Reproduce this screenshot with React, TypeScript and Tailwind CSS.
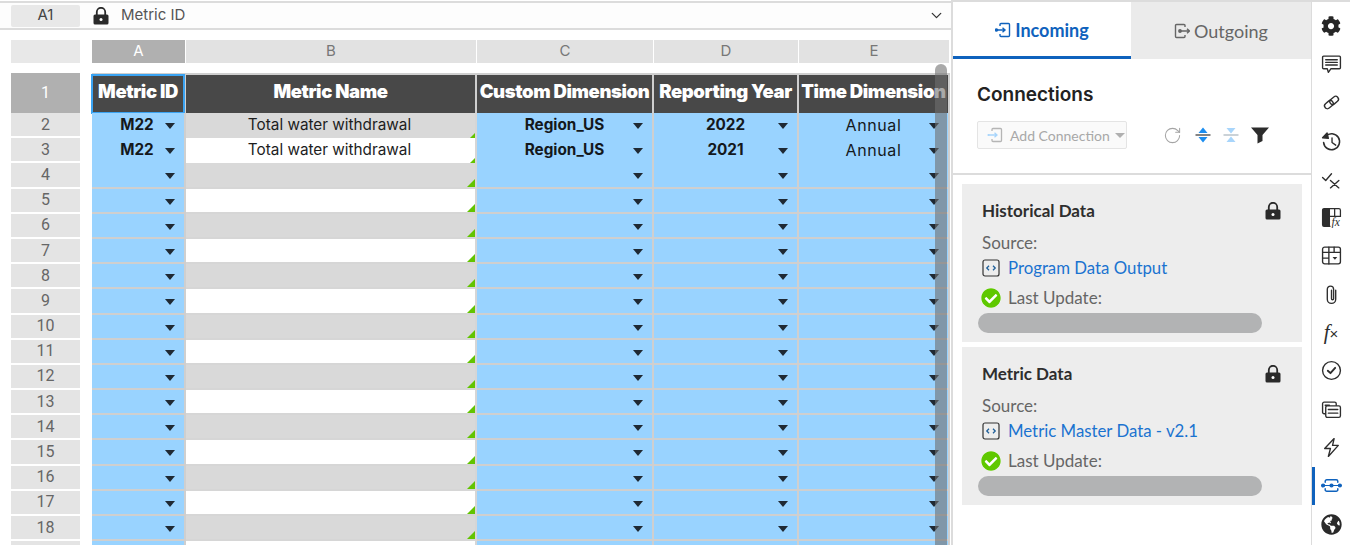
import { useMemo } from 'react';
import { FaCog, FaGlobeAmericas, FaCheckCircle } from 'react-icons/fa';
import { ChevronDown, RotateCw } from 'lucide-react';

const gridCols = 'grid grid-cols-[92px_94px_291px_177px_145px_151px]';

type Row = { id: string; name: string; dim: string; year: string; time: string };

const rows: Row[] = [
  { id: 'M22', name: 'Total water withdrawal', dim: 'Region_US', year: '2022', time: 'Annual' },
  { id: 'M22', name: 'Total water withdrawal', dim: 'Region_US', year: '2021', time: 'Annual' },
];

function LockIcon({ className }: { className?: string }) {
  return (
    <svg width="16" height="18" viewBox="0 0 16 18" className={className}>
      <path d="M3.800 8V5a4.200 4.200 0 0 1 8.400 0v3" fill="none" stroke="#2a2a2a" strokeWidth="1.800" />
      <rect x="0.500" y="7.500" width="15" height="10" rx="1.500" fill="#2a2a2a" />
      <circle cx="8" cy="12.500" r="1.500" fill="#fff" />
    </svg>
  );
}

function Caret() {
  return (
    <span className="absolute right-[9px] top-[10px] h-0 w-0 border-x-[5.5px] border-t-[6px] border-x-transparent border-t-[#1f2933]" />
  );
}

function HeaderCell({ label, selected }: { label: string; selected?: boolean }) {
  return (
    <div className="relative flex items-center justify-center whitespace-nowrap border-r-2 border-t-2 border-[#cfcfcf] bg-[#484848] pb-[4px] font-['Inter',sans-serif] text-[18.5px] font-black tracking-[-0.4px] text-white">
      {label}
      {selected && <span className="absolute -inset-y-[1px] -left-[1px] -right-[1px] border-2 border-[#3aa3f2]" />}
    </div>
  );
}

function DropCell({ value, bold }: { value?: string; bold?: boolean }) {
  return (
    <div
      className={`relative flex items-center justify-center border-b-2 border-r-2 border-[#cfcfcf] bg-[#99d3ff] pb-[4px] text-[#14181c] ${
        bold ? 'text-[15.3px] font-bold' : 'text-[16px] font-normal tracking-[0.6px]'
      }`}
    >
      {value}
      <Caret />
    </div>
  );
}

function SheetRow({ n, row }: { n: number; row?: Row }) {
  const shaded = n % 2 === 0;
  return (
    <div className={`${gridCols} h-[25.2px]`}>
      <div className="ml-[11px] mr-[12px] flex h-[23.2px] items-center justify-center bg-[#e4e4e4] font-['Roboto',sans-serif] text-[16px] text-[#666]">
        {n < 19 ? n : ''}
      </div>
      <div className="relative flex items-center justify-center border-b-2 border-r-2 border-[#cfcfcf] bg-[#99d3ff] pb-[4px] pr-[2px] text-[15.3px] font-bold text-[#14181c]">
        {row?.id}
        <Caret />
      </div>
      <div
        className={`relative flex items-center justify-center border-b-2 border-r-2 border-[#d6d6d6] pb-[4px] pr-[2px] text-[15.3px] text-[#1d1d1d] ${
          shaded ? 'bg-[#d9d9d9]' : 'bg-white'
        }`}
      >
        {row?.name}
        <span className="absolute bottom-0 right-0 h-0 w-0 border-b-[8px] border-l-[8px] border-b-[#62c400] border-l-transparent" />
      </div>
      <DropCell value={row?.dim} bold />
      <DropCell value={row?.year} bold />
      <DropCell value={row?.time} />
    </div>
  );
}

function ColumnLetter({ label, active }: { label: string; active?: boolean }) {
  return (
    <div
      className={`mr-[1px] flex items-center justify-center text-[15px] ${
        active ? 'bg-[#b0b0b0] text-white' : 'bg-[#e2e2e2] text-[#777]'
      }`}
    >
      {label}
    </div>
  );
}

function Sheet() {
  const sheetRows = useMemo(() => Array.from({ length: 18 }, (_, i) => i + 2), []);
  return (
    <div className="flex w-[951px] shrink-0 flex-col font-['Inter',sans-serif]">
      <div className="mt-[1px] flex h-[29px] items-center border-y-2 border-[#dcdcdc] bg-[#fdfdfd] pl-[11px] pr-[6px]">
        <div className="flex h-[22px] w-[69px] items-center justify-center rounded-[2px] bg-[#e8e8e8] text-[15px] text-[#444]">
          A1
        </div>
        <LockIcon className="ml-[13px]" />
        <span className="ml-[12px] text-[15px] text-[#555]">Metric ID</span>
        <ChevronDown className="ml-auto h-[17px] w-[17px] text-[#333]" strokeWidth={1.8} />
      </div>

      <div className="relative min-h-0 flex-1 overflow-hidden pt-[10px]">
        <div className={`${gridCols} h-[22px]`}>
          <div className="ml-[11px] mr-[12px] bg-[#e8e8e8]" />
          <ColumnLetter label="A" active />
          <ColumnLetter label="B" />
          <ColumnLetter label="C" />
          <ColumnLetter label="D" />
          <ColumnLetter label="E" />
        </div>

        <div className={`${gridCols} mt-[11px] h-[40px]`}>
          <div className="ml-[11px] mr-[12px] flex items-center justify-center bg-[#b0b0b0] font-['Roboto',sans-serif] text-[16px] text-white">
            1
          </div>
          <HeaderCell label="Metric ID" selected />
          <HeaderCell label="Metric Name" />
          <HeaderCell label="Custom Dimension" />
          <HeaderCell label="Reporting Year" />
          <HeaderCell label="Time Dimension" />
        </div>

        {sheetRows.map((n) => (
          <SheetRow key={n} n={n} row={rows[n - 2]} />
        ))}

        {/* scrollbar thumb floats over the cells */}
        <div className="absolute bottom-0 left-[935px] top-[34px] w-[12px] rounded-t-full bg-[#707070]/60" />
      </div>
    </div>
  );
}

function TabIncoming() {
  return (
    <svg width="16" height="16" viewBox="0 0 16 16" fill="none" stroke="currentColor" strokeWidth="1.4">
      <path d="M5 4V2.500A1 1 0 0 1 6 1.500h7.500a1 1 0 0 1 1 1v11a1 1 0 0 1-1 1H6a1 1 0 0 1-1-1V12" />
      <circle cx="1.500" cy="8" r="1.100" fill="currentColor" />
      <path d="M1.500 8H9.500M7.500 5.800 10 8l-2.500 2.200" />
    </svg>
  );
}

function TabOutgoing() {
  return (
    <svg width="16" height="16" viewBox="0 0 16 16" fill="none" stroke="currentColor" strokeWidth="1.4">
      <path d="M11 4V2.500a1 1 0 0 0-1-1H2.500a1 1 0 0 0-1 1v11a1 1 0 0 0 1 1H10a1 1 0 0 0 1-1V12" />
      <circle cx="6" cy="8" r="1.200" fill="currentColor" />
      <path d="M6 8h9M13 5.800 15.500 8 13 10.200" />
    </svg>
  );
}

function AddConnectionIcon() {
  return (
    <svg width="16" height="16" viewBox="0 0 16 16" fill="none" strokeWidth="1.300" className="shrink-0">
      <path d="M5 4V2.500A1 1 0 0 1 6 1.500h7.500a1 1 0 0 1 1 1v11a1 1 0 0 1-1 1H6a1 1 0 0 1-1-1V12" stroke="#b5b5b5" />
      <circle cx="1.500" cy="8" r="1.100" fill="#a8d5fb" />
      <path d="M1.500 8H9.500M7.500 5.800 10 8l-2.500 2.200" stroke="#a8d5fb" />
    </svg>
  );
}

function ExpandIcon() {
  return (
    <svg width="16" height="18" viewBox="0 0 16 18" className="text-[#1b8df0]">
      <path d="M8 1.500 12.500 7h-9z" fill="currentColor" />
      <path d="M8 16.500 3.500 11h9z" fill="currentColor" />
      <path d="M0.500 9h15" stroke="#333" strokeWidth="1.200" />
    </svg>
  );
}

function CollapseIcon() {
  return (
    <svg width="16" height="18" viewBox="0 0 16 18" className="text-[#a8d5fb]">
      <path d="M8 7.500 3.500 2h9z" fill="currentColor" />
      <path d="M8 10.500 12.500 16h-9z" fill="currentColor" />
      <path d="M0.500 9h15" stroke="#a9b4bd" strokeWidth="1.200" />
    </svg>
  );
}

function SourceIcon() {
  return (
    <svg width="18" height="18" viewBox="0 0 18 18" fill="none" stroke="#333" className="shrink-0">
      <rect x="1" y="1" width="16" height="16" rx="2" strokeWidth="1.200" />
      <path d="M7 6.800 4.800 9 7 11.200M11 6.800 13.200 9 11 11.200" stroke="#1f5f99" strokeWidth="1.300" />
    </svg>
  );
}

function ConnectionCard({ title, source }: { title: string; source: string }) {
  return (
    <div className="h-[158px] bg-[#ededed] pl-[16px] pr-[21px] pt-[15px] font-['Lato',sans-serif]">
      <div className="flex h-[24px] items-center justify-between pl-[4px]">
        <span className="text-[17px] font-bold text-[#2e2e2e]">{title}</span>
        <LockIcon />
      </div>
      <div className="mt-[8px] h-[24px] pl-[4px] text-[17px] leading-[24px] text-[#666]">Source:</div>
      <div className="mt-[1px] flex h-[24px] items-center pl-[4px] text-[16.8px] text-[#1a73d0]">
        <SourceIcon />
        <span className="ml-[8px]">{source}</span>
      </div>
      <div className="mt-[6px] flex h-[24px] items-center pl-[3px] text-[17px] text-[#666]">
        <span className="relative h-[20px] w-[20px] shrink-0 rounded-full bg-white">
          <FaCheckCircle className="absolute inset-0 h-[20px] w-[20px] text-[#5fc800]" />
        </span>
        <span className="ml-[7px]">Last Update:</span>
      </div>
      <div className="mt-[3px] h-[20px] w-[284px] rounded-full bg-[#b2b3b4]" />
    </div>
  );
}

function ConnectionsPanel() {
  return (
    <div className="flex w-[360px] shrink-0 flex-col border-l-2 border-t-2 border-[#dcdcdc] font-['Lato',sans-serif]">
      <div className="flex h-[57px]">
        <div className="flex w-[178px] items-center justify-center gap-[4px] border-b-[3px] border-[#0f62bd] pt-[2px] text-[18px] font-bold text-[#0f62bd]">
          <TabIncoming />
          Incoming
        </div>
        <div className="flex flex-1 items-center justify-center gap-[4px] bg-[#ebebeb] pt-[1px] text-[18px] text-[#666]">
          <TabOutgoing />
          Outgoing
        </div>
      </div>

      <div className="h-[116px] border-b-2 border-[#dcdcdc] pl-[24px] pt-[24px]">
        <h2 className="font-['Inter',sans-serif] text-[19px] font-semibold leading-[24px] text-[#222]">Connections</h2>
        <div className="mt-[14px] flex h-[28px] items-center">
          <div className="flex h-[28px] w-[150px] items-center whitespace-nowrap rounded-[2px] border border-[#e4e4e4] bg-[#fafafa] pl-[9px] text-[14px] text-[#a8a8a8]">
            <AddConnectionIcon />
            <span className="ml-[7px]">Add Connection</span>
            <span className="ml-[5px] h-0 w-0 border-x-[5px] border-t-[5px] border-x-transparent border-t-[#b0b0b0]" />
          </div>
          <RotateCw className="ml-[36px] h-[19px] w-[19px] text-[#a4a4a4]" strokeWidth={1.3} />
          <span className="ml-[13px]">
            <ExpandIcon />
          </span>
          <span className="ml-[12px]">
            <CollapseIcon />
          </span>
          <svg width="18" height="17" viewBox="0 0 18 17" className="ml-[12px] text-[#2c2c2c]">
            <path d="M0 0.500h18L11.500 8v6L6.500 16.500V8z" fill="currentColor" />
          </svg>
        </div>
      </div>

      <div className="flex flex-col gap-[5px] pl-[9px] pr-[9px] pt-[9px]">
        <ConnectionCard title="Historical Data" source="Program Data Output" />
        <ConnectionCard title="Metric Data" source="Metric Master Data - v2.1" />
      </div>
    </div>
  );
}

function RailSvg({ children }: { children: React.ReactNode }) {
  return (
    <svg width="21" height="21" viewBox="0 0 20 20" fill="none" stroke="#2e2e2e" strokeWidth="1.300" strokeLinecap="round" strokeLinejoin="round">
      {children}
    </svg>
  );
}

const railIcons: React.ReactNode[] = [
  <FaCog key="gear" className="h-[20px] w-[20px] text-[#262626]" />,
  <RailSvg key="comment">
    <path d="M2.500 2h15a1 1 0 0 1 1 1v10a1 1 0 0 1-1 1H9.500l-2.500 3.500L6 14H2.500a1 1 0 0 1-1-1V3a1 1 0 0 1 1-1z" />
    <path d="M4.500 5.500h11M4.500 8h11M4.500 10.500h11" />
  </RailSvg>,
  <RailSvg key="link">
    <rect x="3" y="9.300" width="9" height="5.400" rx="2.600" transform="rotate(-40 7.500 12)" />
    <rect x="8" y="5.300" width="9" height="5.400" rx="2.600" transform="rotate(-40 12.500 8)" />
  </RailSvg>,
  <RailSvg key="history">
    <path d="M4.500 5a7.600 7.600 0 1 1-2 6" strokeWidth="1.500" />
    <path d="M1.500 6.500 5.800 1.800 7 7z" fill="#2e2e2e" />
    <path d="M10.500 6.500V11l3.500 2.500" />
  </RailSvg>,
  <RailSvg key="checkx">
    <path d="M1.500 8 4.500 11 10 4.500M9 11l8 7M17 11l-8 7" />
  </RailSvg>,
  <svg key="fxgrid" width="21" height="21" viewBox="0 0 20 20" fill="none" stroke="#2e2e2e" strokeWidth="1.200">
    <path d="M3 1.500h5v17H3a1.500 1.500 0 0 1-1.500-1.500V3A1.500 1.500 0 0 1 3 1.500z" fill="#2e2e2e" />
    <path d="M8 1.500h9A1.500 1.500 0 0 1 18.500 3v6H8M13 1.500v7.500" />
    <path d="M8 18.500h1" />
    <text x="10" y="18" fontSize="11" fontStyle="italic" fontFamily="'Liberation Serif', serif" fill="#2e2e2e" stroke="none">
      fx
    </text>
  </svg>,
  <RailSvg key="table">
    <rect x="1.500" y="2" width="17" height="16" rx="2" />
    <path d="M1.500 7h17M1.500 12.500h6M7.500 2v16M12.500 2v5" />
    <path d="M11 11.500h4.500l-2.250 2.500z" fill="#2e2e2e" stroke="none" />
  </RailSvg>,
  <RailSvg key="clip">
    <path d="M14 6v8.500a4 4 0 0 1-8 0V5a3 3 0 0 1 6 0v9a1 1 0 0 1-2 0V6" />
  </RailSvg>,
  <span key="fx" className="font-['Liberation_Serif',serif] text-[21px] italic leading-none text-[#2e2e2e]">
    f<span className="font-['Liberation_Sans',sans-serif] text-[15px] not-italic">×</span>
  </span>,
  <RailSvg key="check">
    <circle cx="10" cy="10" r="8.500" />
    <path d="M6.500 10.200 9 12.500 13.500 7.500" strokeWidth="1.800" />
  </RailSvg>,
  <RailSvg key="cards">
    <path d="M4 14H3a1.500 1.500 0 0 1-1.500-1.500v-8A1.500 1.500 0 0 1 3 3h10A1.500 1.500 0 0 1 14.500 4.500V6" />
    <rect x="4.500" y="6.500" width="14" height="11" rx="1.500" />
    <path d="M7 10h9M7 13.500h9M4 6h4" />
  </RailSvg>,
  <RailSvg key="bolt">
    <path d="M12.500 1.500 3.500 11H9L7 18.500 16.500 8H11z" />
  </RailSvg>,
  <svg key="link-active" width="21" height="21" viewBox="0 0 20 20" fill="none" stroke="#0f62bd" strokeWidth="1.400" strokeLinecap="round">
    <path d="M4 7V6a1.500 1.500 0 0 1 1.500-1.500h9A1.500 1.500 0 0 1 16 6v1M4 13v1a1.500 1.500 0 0 0 1.500 1.500h9A1.500 1.500 0 0 0 16 14v-1" />
    <path d="M1 10h18" strokeWidth="1.100" />
    <circle cx="2" cy="10" r="1.300" fill="#0f62bd" />
    <circle cx="10" cy="10" r="1.300" fill="#0f62bd" />
    <circle cx="18" cy="10" r="1.300" fill="#0f62bd" />
  </svg>,
  <FaGlobeAmericas key="globe" className="h-[21px] w-[21px] text-[#2a2a2a]" />,
];

function Rail() {
  const activeIndex = 12;
  return (
    <div className="flex w-[39px] shrink-0 flex-col border-l border-t-2 border-[#dcdcdc] pt-[5px]">
      {railIcons.map((icon, i) => (
        <div
          key={i}
          className={`flex h-[38.3px] shrink-0 items-center justify-center border-l-[3px] pr-[3px] ${
            i === activeIndex ? 'border-[#0f62bd]' : 'border-transparent'
          }`}
        >
          {icon}
        </div>
      ))}
    </div>
  );
}

export default function App() {
  return (
    <div className="flex h-[545px] w-[1350px] overflow-hidden bg-white">
      <Sheet />
      <ConnectionsPanel />
      <Rail />
    </div>
  );
}
